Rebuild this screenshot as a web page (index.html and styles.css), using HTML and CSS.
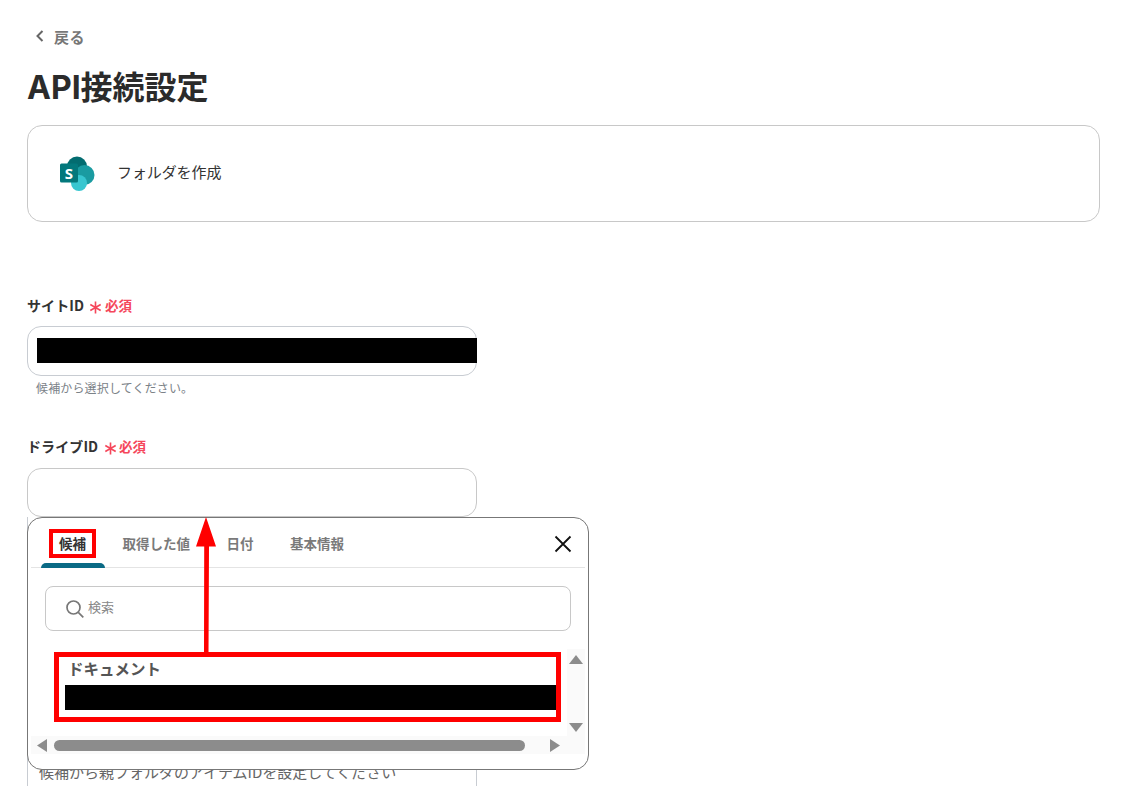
FILE: index.html
```html
<!DOCTYPE html>
<html lang="ja">
<head>
<meta charset="utf-8">
<title>API接続設定</title>
<link rel="stylesheet" href="styles.css">
</head>
<body>
<main class="page">
  <a class="back">
    <svg class="back-icon" width="12" height="14" viewBox="0 0 12 14"><path d="M8.5 2 3.500 7l5 5" fill="none" stroke="#666" stroke-width="2"/></svg>
    <span>戻る</span>
  </a>
  <h1 class="title">API接続設定</h1>
  <section class="card">
    <svg class="sp-icon" width="38" height="36" viewBox="0 0 38 36">
      <circle cx="19" cy="10.500" r="10" fill="#036c70"/>
      <circle cx="26.500" cy="19" r="10" fill="#1a9ba1"/>
      <circle cx="21" cy="27" r="8" fill="#37c6d0"/>
      <rect x="2" y="7.500" width="18" height="19" rx="1.500" fill="#03787c"/>
      <text x="11" y="23" class="sp-s">S</text>
    </svg>
    <span class="card-text">フォルダを作成</span>
  </section>

  <div class="field field-site">
    <label class="label">サイトID
      <span class="req">
        <svg class="star" width="13" height="13" viewBox="0 0 12 12"><path d="M6 .5v11M1.200 3.200l9.600 5.600M10.800 3.200l-9.600 5.600" stroke="#f5475b" stroke-width="1.500" fill="none"/></svg>
        必須
      </span>
    </label>
    <div class="input input-site"><div class="mask"></div></div>
    <p class="hint">候補から選択してください。</p>
  </div>

  <div class="field field-drive">
    <label class="label">ドライブID
      <span class="req">
        <svg class="star" width="13" height="13" viewBox="0 0 12 12"><path d="M6 .5v11M1.200 3.200l9.600 5.600M10.800 3.200l-9.600 5.600" stroke="#f5475b" stroke-width="1.500" fill="none"/></svg>
        必須
      </span>
    </label>
    <div class="input input-drive"></div>
    <div class="anchor">
      <div class="under">候補から親フォルダのアイテムIDを設定してください</div>
      <div class="popup">
        <div class="tabs">
          <span class="tab tab-active">候補</span>
          <span class="tab">取得した値</span>
          <span class="tab">日付</span>
          <span class="tab">基本情報</span>
          <svg class="close" width="18" height="18" viewBox="0 0 18 18"><path d="M1.500 1.500l15 15M16.500 1.500l-15 15" stroke="#111" stroke-width="1.800" fill="none"/></svg>
        </div>
        <div class="search">
          <svg width="20" height="20" viewBox="0 0 20 20"><circle cx="8.500" cy="8.500" r="6.500" fill="none" stroke="#777" stroke-width="1.700"/><path d="m13.300 13.300 5 5" stroke="#777" stroke-width="1.700"/></svg>
          <span class="search-text">検索</span>
        </div>
        <div class="list-row">
          <div class="list">
            <div class="list-title">ドキュメント</div>
            <div class="list-mask"></div>
          </div>
          <div class="vscroll">
            <svg width="14" height="10" viewBox="0 0 14 10"><path d="M7 0l7 9H0z" fill="#8c8c8c"/></svg>
            <svg width="14" height="10" viewBox="0 0 14 10"><path d="M7 10l7-9H0z" fill="#8c8c8c"/></svg>
          </div>
        </div>
        <div class="hscroll">
          <svg width="10" height="13" viewBox="0 0 10 13"><path d="M0 6.500 10 0v13z" fill="#8c8c8c"/></svg>
          <div class="thumb"></div>
          <svg width="10" height="13" viewBox="0 0 10 13"><path d="M10 6.500 0 0v13z" fill="#8c8c8c"/></svg>
        </div>
      </div>
    </div>
  </div>
</main>

<div class="mark mark-tab"></div>
<div class="mark mark-list"></div>
<svg class="arrow" width="22" height="136" viewBox="0 0 22 136"><path d="M11 0 21 29.500H14L13.500 136H9L9.200 29.500H1z" fill="#f00"/></svg>
</body>
</html>
```

FILE: styles.css
```css
* { box-sizing: border-box; }
html, body { margin: 0; height: 786px; overflow: hidden; background: #fff; }
body {
  position: relative;
  font-family: "Noto Sans CJK JP", "Noto Sans", sans-serif;
  color: #2b2b2b;
}
.page { padding: 26px 30px 0 27px; }

.back {
  display: flex;
  align-items: center;
  gap: 7px;
  height: 20px;
  padding-left: 7px;
  font-size: 15px;
  letter-spacing: .5px;
  font-weight: 700;
  color: #777;
}
.back span { margin-left: 1px; }
.title {
  margin: 18px 0 0;
  font-family: "Inter", "Noto Sans CJK JP", sans-serif;
  font-size: 32px;
  line-height: 48px;
  font-weight: 700;
  color: #2b2b2b;
}
.card {
  margin-top: 13px;
  height: 97px;
  border: 1px solid #c8c8c8;
  border-radius: 15px;
  display: flex;
  align-items: center;
  padding: 0 0 4px 30px;
}
.sp-icon { flex: none; margin-top: 4px; }
.sp-s {
  font-family: "Open Sans", sans-serif;
  font-size: 15px;
  font-weight: 700;
  fill: #fff;
  text-anchor: middle;
}
.card-text { margin-left: 21px; font-size: 15px; letter-spacing: -.1px; color: #333; }

.field { width: 450px; }
.field-site { margin-top: 73px; }
.field-drive { margin-top: 39px; }
.label {
  display: block;
  height: 20px;
  line-height: 20px;
  font-size: 14px;
  letter-spacing: .1px;
  font-weight: 700;
  color: #333;
  white-space: nowrap;
}
.req { color: #f5475b; font-size: 13.500px; font-weight: 700; letter-spacing: 0; }
.star { vertical-align: -2.500px; margin: 0 -.5px 0 2px; }
.input {
  border: 1px solid #c8ccd2;
  border-radius: 14px;
  background: #fff;
}
.input-site { height: 50px; margin-top: 11px; padding: 11px 0 0 9px; }
.input-drive { height: 49px; margin-top: 12px; border-color: #c8c8c8; }
.mask { height: 25px; margin-right: -1px; background: #000; }
.hint {
  margin: 3px 0 0 9px;
  font-size: 12px;
  letter-spacing: .15px;
  line-height: 18px;
  color: #7b8288;
}

.anchor { position: relative; height: 300px; }
.under {
  height: 300px;
  padding: 245px 0 0 11px;
  border-left: 1px solid #c8ccd2;
  border-right: 1px solid #c8ccd2;
  font-size: 15px;
  line-height: 20px;
  color: #666;
  white-space: nowrap;
}
.popup {
  position: absolute;
  top: 0;
  left: 0;
  width: 562px;
  height: 253px;
  background: #fff;
  border: 1px solid #777;
  border-radius: 15px;
  padding: 0 3px;
  display: flex;
  flex-direction: column;
}
.tabs {
  position: relative;
  height: 50px;
  border-bottom: 1px solid #e4e4e4;
  display: flex;
  align-items: center;
  padding: 1px 0 0 28px;
  flex: none;
}
.tab {
  font-size: 13.500px;
  font-weight: 700;
  color: #7a7a7a;
  margin-right: 36.500px;
  white-space: nowrap;
}
.tab-active { color: #333; }
.tab-active::after {
  content: "";
  position: absolute;
  left: 10px;
  bottom: -1px;
  width: 64px;
  height: 5px;
  background: #0a6a85;
  border-radius: 5px 5px 0 0;
}
.close { position: absolute; right: 13px; top: 17px; }
.search {
  flex: none;
  margin: 18px 14px 0;
  height: 45px;
  border: 1px solid #c8c8c8;
  border-radius: 8px;
  display: flex;
  align-items: center;
  gap: 3px;
  padding-left: 19px;
  font-size: 13px;
  color: #888;
}
.search-text { margin-bottom: 5px; }
.list-row { flex: 1; display: flex; margin-top: 18px; min-height: 0; }
.list { flex: 1; padding: 9px 0 0 34px; min-width: 0; }
.list-title {
  padding-left: 3px;
  font-size: 15.500px;
  font-weight: 700;
  line-height: 20px;
  color: #555;
}
.list-mask { height: 25px; margin: 7px 8px 0 0; background: #000; }
.vscroll {
  flex: none;
  width: 18px;
  background: #fafafa;
  display: flex;
  flex-direction: column;
  justify-content: space-between;
  align-items: center;
  padding: 6px 0 4px;
}
.hscroll {
  flex: none;
  height: 18px;
  margin-bottom: 15px;
  background: #fafafa;
  display: flex;
  align-items: center;
  padding: 0 25px 0 6px;
}
.thumb {
  flex: 1;
  height: 11px;
  margin: 0 25px 0 7px;
  background: #8c8c8c;
  border-radius: 6px;
}

.mark { position: absolute; border: 5px solid #f00; pointer-events: none; }
.mark-tab { left: 49px; top: 529px; width: 47px; height: 29px; border-width: 4px; }
.mark-list { left: 54px; top: 652px; width: 507px; height: 70px; }
.arrow { position: absolute; left: 195px; top: 517px; }
```
